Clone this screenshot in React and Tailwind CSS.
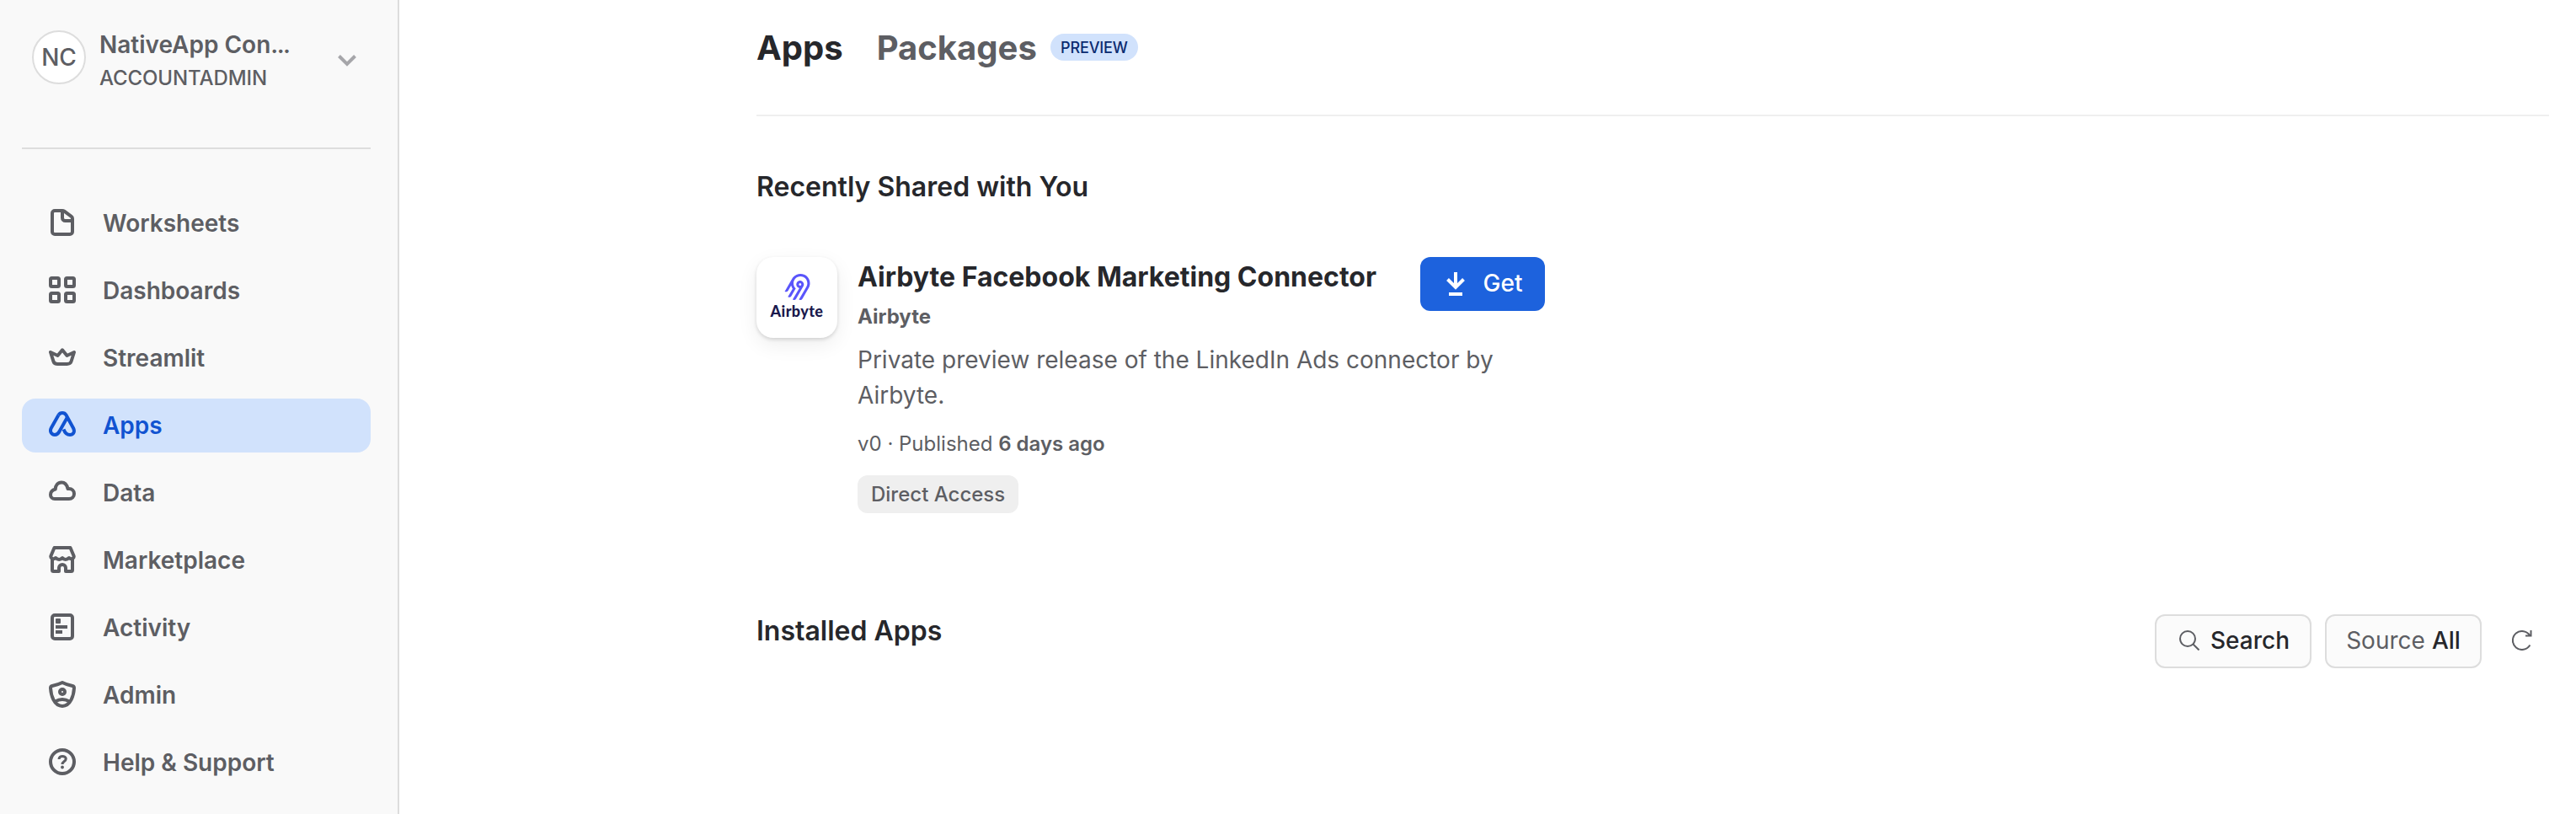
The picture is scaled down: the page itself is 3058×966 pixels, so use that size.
import React from "react";
import { SiAirbyte } from "react-icons/si";

const stroke = {
  fill: "none",
  stroke: "currentColor",
  strokeWidth: 4,
  strokeLinejoin: "round",
};

function Icon({ children }) {
  return (
    <svg viewBox="0 0 32 32" className="-mt-0.5 h-8 w-8 shrink-0" {...stroke}>
      {children}
    </svg>
  );
}

const NAV = [
  {
    label: "Worksheets",
    icon: (
      <>
        <path d="M7 2h9q1.300 0 2.300.7l8.400 6.200q1.300 1 1.300 2.600V27a3 3 0 0 1-3 3H7a3 3 0 0 1-3-3V5a3 3 0 0 1 3-3Z" />
        <path d="M16 2v8.500a3.500 3.500 0 0 0 3.500 3.500H28" />
      </>
    ),
  },
  {
    label: "Dashboards",
    icon: (
      <>
        <rect x="2" y="2" width="10" height="10" rx="1.500" />
        <rect x="20" y="2" width="10" height="10" rx="1.500" />
        <rect x="2" y="20" width="10" height="10" rx="1.500" />
        <rect x="20" y="20" width="10" height="10" rx="1.500" />
      </>
    ),
  },
  {
    label: "Streamlit",
    icon: (
      <path d="M2 10l8.500 4L16 7.300l5.500 6.700L30 10l-3.500 11Q25.500 24 21.500 24h-11Q6.500 24 5.500 21Z" />
    ),
  },
  {
    label: "Apps",
    active: true,
    icon: (
      <>
        <path d="M11.500 4.500Q13 2 16 2t4.500 2.500l8.500 15.500c2.500 5-0.500 8-4 8s-6-2.500-7.500-6.500" />
        <path d="M11.500 4.500L3 19.500c-2.500 4.500 0 8.500 4 8.500 3 0 4.500-2 5.500-4L21.500 8" />
      </>
    ),
  },
  {
    label: "Data",
    icon: (
      <path d="M7 24H24a6 6 0 0 0 0-12h-1.500C21.500 7.500 19 4.500 15 4.500c-4.500 0-7 3.500-7.300 8C4 13.500 2 16.200 2 19.200 2 22 4 24 7 24Z" />
    ),
  },
  {
    label: "Marketplace",
    icon: (
      <>
        <path d="M6.500 2h19l4 9.500c1 3-3 5-5.500 2.500-2.500 2.500-6 2.500-8 0-2 2.500-5.500 2.500-8 0-2.500 2.500-6.500 0.500-5.500-2.500Z" />
        <path d="M4 14v14.500q0 1.500 1.500 1.500H12v-4a4 4 0 0 1 8 0v4h6.500q1.500 0 1.500-1.500V14" />
      </>
    ),
  },
  {
    label: "Activity",
    icon: (
      <>
        <rect x="4" y="2" width="24" height="28" rx="3" />
        <rect x="8" y="6" width="6" height="6" rx="1" fill="currentColor" stroke="none" />
        <path d="M8 16h14M8 22h8" />
      </>
    ),
  },
  {
    label: "Admin",
    icon: (
      <>
        <path d="M16 2c4 2 8 3.200 12 4 1.500 0.300 2 1 2 2.500C29.500 17 26 30 16 30S2.500 17 2 8.500C2 7 2.500 6.300 4 6c4-.8 8-2 12-4Z" />
        <circle cx="16" cy="13" r="3" />
        <path d="M7.500 24.500q8.500-5 17 0" />
      </>
    ),
  },
  {
    label: "Help & Support",
    icon: (
      <>
        <circle cx="16" cy="16" r="14" />
        <path strokeWidth="3" d="M12 13c0-5 8.300-4.500 8.300-0.500 0 3-4.300 3-4.300 6.500" />
        <circle cx="16" cy="22.500" r="1.900" fill="currentColor" stroke="none" />
      </>
    ),
  },
];

function Sidebar() {
  return (
    <aside className="flex w-[474px] shrink-0 flex-col border-r-2 border-[#dddddd] bg-[#f9f9f9] pl-[26px] pr-8">
      <div className="flex h-[151px] items-start pl-3 pr-[17px] pt-[33px]">
        <div className="mt-[3px] flex h-16 w-16 items-center justify-center rounded-full border-2 border-[#dddddd] bg-white text-[28px] font-medium tracking-[-0.2px]">
          NC
        </div>
        <div className="ml-4 flex-1">
          <div className="text-[28px] font-semibold leading-[41px]">
            NativeApp Con<span className="tracking-[-1.5px]">...</span>
          </div>
          <div className="text-[24px] font-medium leading-[38px] tracking-[-0.1px]">ACCOUNTADMIN</div>
        </div>
        <svg viewBox="0 0 22 14" className="mt-8 h-3.5 w-[22px]" fill="none" stroke="#a6a6aa" strokeWidth="4">
          <path d="M1.500 1.500L11 11l9.500-9.500" />
        </svg>
      </div>
      <div className="mt-6 h-0.5 bg-[#dddddd]" />
      <nav className="mt-14 flex flex-col gap-4">
        {NAV.map((n) => (
          <a
            key={n.label}
            className={
              "flex h-16 items-center gap-8 rounded-2xl pl-8 text-[28px] font-semibold " +
              (n.active ? "bg-[#d1e2fc] text-[#1153d1]" : "")
            }
          >
            <Icon>{n.icon}</Icon>
            {n.label}
          </a>
        ))}
      </nav>
    </aside>
  );
}

function AppCard() {
  return (
    <article className="mt-[59px] flex w-[936px] items-start">
      <div className="flex h-24 w-24 shrink-0 flex-col items-center rounded-[20px] bg-white pt-5 shadow-[0_2px_4px_rgba(0,0,0,0.14),0_8px_24px_rgba(0,0,0,0.07)]">
        <SiAirbyte className="h-[31px] w-[31px] text-[#5a55fb]" />
        <span className="mt-[3px] font-['Lato'] text-[18px] font-black leading-5 tracking-[0.400px] text-[#1a194d]">
          Airbyte
        </span>
      </div>
      <div className="ml-6 min-w-0 flex-1">
        <div className="flex h-12 items-start justify-between">
          <h3 className="whitespace-nowrap text-[32px] font-bold leading-[48px] text-[#26272b]">
            Airbyte Facebook Marketing Connector
          </h3>
          <button className="flex h-16 w-[148px] shrink-0 items-center rounded-xl bg-[#1d62dd] pl-[31px] text-[28px] font-medium text-white">
            <svg viewBox="0 0 22 28" className="h-7 w-[22px]" fill="none" stroke="currentColor" strokeWidth="4">
              <path d="M11 0v18M1.500 8.500L11 18l9.500-9.500M3 26h16" />
            </svg>
            <span className="-mt-0.5 ml-[21.500px]">Get</span>
          </button>
        </div>
        <div className="mt-[5px] text-[24px] font-bold leading-9">Airbyte</div>
        <p className="mt-3 w-[800px] text-[28px] leading-[42px]">
          Private preview release of the LinkedIn Ads connector by Airbyte.
        </p>
        <div className="mt-[19px] text-[24px] leading-9">
          v0 · Published <b className="font-semibold">6 days ago</b>
        </div>
        <span className="mt-[19px] flex h-[45px] w-fit items-center rounded-xl bg-[#efefef] px-4 text-[24px] font-medium">
          Direct Access
        </span>
      </div>
    </article>
  );
}

function Toolbar() {
  return (
    <div className="flex items-center">
      <button className="flex h-16 w-[186px] items-center rounded-xl border-2 border-[#dddddd] bg-[#fbfbfb] pb-0.5 pl-[27px] text-[28px] font-medium text-[#26272b]">
        <svg viewBox="0 0 24 24" className="-mt-px h-6 w-6 text-[#5d5e63]" fill="none" stroke="currentColor" strokeWidth="2">
          <circle cx="10" cy="10" r="9" />
          <path d="M16.500 16.500l7 7" />
        </svg>
        <span className="ml-[13px]">Search</span>
      </button>
      <button className="ml-4 flex h-16 w-[186px] items-center justify-center gap-2 rounded-xl border-2 border-[#dddddd] bg-[#fbfbfb] pb-0.5 text-[28px]">
        Source <span className="font-medium text-[#26272b]">All</span>
      </button>
      <svg viewBox="0 0 24 24" className="-mt-0.5 ml-9 mr-5 h-6 w-6" fill="none" stroke="currentColor" strokeWidth="2">
        <path d="M21.400 17.600A11 11 0 1 1 21.400 6.400M22.500 0v6.500h-6.500" />
      </svg>
    </div>
  );
}

export default function App() {
  return (
    <div className="flex h-[966px] w-[3058px] overflow-hidden bg-white font-['Inter',sans-serif] text-[#5d5e63]">
      <Sidebar />
      <main className="flex-1 pl-[424px] pr-8">
        <header className="flex h-[138px] items-start border-b-2 border-[#efefef] pt-8">
          <h1 className="text-[40px] font-bold leading-[49px] text-[#26272b]">Apps</h1>
          <h1 className="ml-10 text-[40px] font-bold leading-[49px]">Packages</h1>
          <span className="ml-4 mt-2 flex h-8 w-[104px] items-center justify-center rounded-full bg-[#d1e2fc] text-[18px] font-medium tracking-[-0.15px] text-[#0b2b70]">
            PREVIEW
          </span>
        </header>
        <h2 className="mt-[60px] text-[32px] font-semibold leading-[48px] text-[#26272b]">
          Recently Shared with You
        </h2>
        <AppCard />
        <div className="mt-[120px] flex items-start justify-between">
          <h2 className="-mt-1 text-[32px] font-semibold leading-[48px] text-[#26272b]">Installed Apps</h2>
          <Toolbar />
        </div>
      </main>
    </div>
  );
}
